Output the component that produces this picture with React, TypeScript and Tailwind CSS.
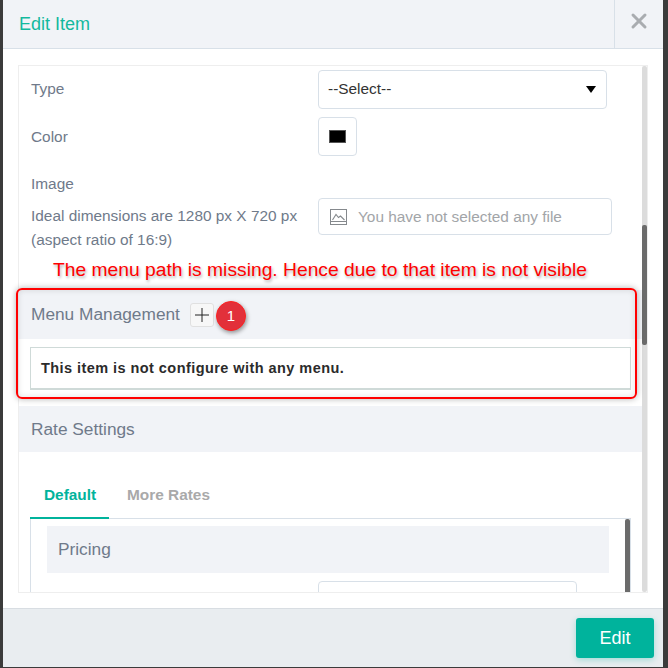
import { X } from "lucide-react"

const sans = "font-['Liberation_Sans',Arial,sans-serif]"

function ImageIcon() {
  return (
    <svg width="17" height="16" viewBox="0 0 17 16" fill="none" stroke="#85898d" strokeWidth="1">
      <rect x="0.5" y="0.5" width="16" height="15" />
      <path d="M0.5 12.5 H16.5" />
      <path d="M2.5 11 L6 5.5 L8.5 8.5 L10.5 7 L14.5 11" strokeWidth="1.1" />
    </svg>
  )
}

function PlusIcon() {
  return (
    <svg width="14" height="14" viewBox="0 0 14 14" stroke="#222" strokeWidth="1">
      <path d="M7 0 V14 M0 7 H14" />
    </svg>
  )
}

export default function App() {
  return (
    <div className={`w-[668px] h-[668px] bg-[#3b3b3b] pl-[3px] pr-[5px] pb-[1px] ${sans}`}>
      <div className="relative flex flex-col w-[660px] h-[667px] bg-white overflow-hidden">
        {/* Header */}
        <div className="flex h-[49px] shrink-0 items-stretch justify-between bg-[#f1f3f7] border-b border-[#d8e0e8]">
          <h4 className="pl-4 pt-[12px] text-[18px] leading-6 text-[#13b99e]">Edit Item</h4>
          <div className="flex w-[49px] justify-center pt-[9px] border-l border-[#d8e0e8]">
            <X size={24} strokeWidth={3} className="text-[#a9acb0]" />
          </div>
        </div>

        {/* Body */}
        <div className="flex-1 px-[15px] pt-[16px] pb-[15px] min-h-0">
          <div className="relative h-full w-[630px] border border-[#eeeeee] overflow-hidden">
            <div className="pr-[16px] text-[15.4px] text-[#6f7a8a]">
              <div className="flex items-center h-[38px] mt-[4px] pl-[12px]">
                <div className="w-[287px]">Type</div>
                <div className="flex items-center justify-between w-[289px] h-[39px] pl-[9px] pr-[10px] border border-[#d8e0e8] rounded-[4px] text-[#333]">
                  <span>--Select--</span>
                  <span className="w-0 h-0 border-x-[5px] border-x-transparent border-t-[7px] border-t-black" />
                </div>
              </div>
              <div className="flex items-center h-[39px] mt-[9px] pl-[12px]">
                <div className="w-[287px] pt-[1px]">Color</div>
                <div className="flex items-center justify-center w-[39px] h-[39px] border border-[#d8e0e8] rounded-[4px]">
                  <span className="w-[17px] h-[13px] bg-black border border-[#555]" />
                </div>
              </div>
              <div className="flex items-start mt-[16px] pl-[12px]">
                <div className="w-[287px] shrink-0">
                  <div className="leading-6">Image</div>
                  <div className="mt-[8px] leading-6 whitespace-nowrap">
                    Ideal dimensions are 1280 px X 720 px
                    <br />
                    (aspect ratio of 16:9)
                  </div>
                </div>
                <div className="flex items-center w-[294px] h-[37px] mt-[26px] pl-[11px] gap-[11px] border border-[#d8e0e8] rounded-[4px] text-[#a2a5a8] whitespace-nowrap">
                  <ImageIcon />
                  <span>You have not selected any file</span>
                </div>
              </div>

              {/* Menu Management */}
              <div className="flex items-center h-[49px] mt-[38px] pl-[12px] bg-[#f1f3f7] text-[17.3px] w-[623px]">
                Menu Management
                <span className="flex items-center justify-center w-[24px] h-[24px] ml-[10px] bg-[#f7f7f7] border border-[#e0e0e0] rounded-[3px]">
                  <PlusIcon />
                </span>
              </div>
              <div className="w-[601px] h-[43px] ml-[11px] mt-[8px] pl-[10px] pt-[1px] flex items-center border border-[#cfdad8] border-b-2 text-[14.5px] font-bold tracking-[0.44px] text-[#2b2b2b]">
                This item is not configure with any menu.
              </div>

              {/* Rate Settings */}
              <div className="flex items-center h-[46px] mt-[16px] pl-[12px] pt-[1px] bg-[#f1f3f7] text-[17.3px] w-[623px]">
                Rate Settings
              </div>
              <div className="flex h-[67px] ml-[11px] w-[601px] items-end border-b border-[#d8e0e8] font-bold">
                <div className="w-[79px] pl-[14px] pb-[11px] -mb-px border-b-2 border-[#00b39c] text-[#00b39c]">Default</div>
                <div className="pl-[18px] pb-[12px] text-[#a9a9a9]">More Rates</div>
              </div>
              <div className="relative ml-[11px] w-[601px] h-[80px] border-x border-[#d8e0e8] pl-[16px] pt-[7px]">
                <div className="flex items-center h-[47px] w-[562px] pl-[11px] bg-[#f1f3f7] text-[17.3px]">Pricing</div>
                <div className="ml-[271px] mt-[8px] w-[259px] h-[40px] border border-[#d8e0e8] rounded-[4px]" />
                {/* inner scrollbar */}
                <div className="absolute right-0 top-0 w-[5px] h-[80px] rounded-t-[2px] bg-[#6b6b6b]" />
              </div>
            </div>

            {/* outer scrollbar */}
            <div className="absolute right-0 top-0 bottom-0 w-[5px] rounded-[2px] bg-[#dcdcdc]">
              <div className="mt-[159px] h-[120px] rounded-[2px] bg-[#6b6b6b]" />
            </div>
          </div>
        </div>

        {/* Footer */}
        <div className="flex justify-end items-center h-[59px] shrink-0 pr-[9px] bg-[#e9edf0] border-t border-[#d8dde2]">
          <button className="w-[78px] h-[40px] rounded-[3px] bg-[#00b39c] text-[18px] text-white shadow-[0_2px_6px_rgba(0,179,156,0.3)]">
            Edit
          </button>
        </div>

        {/* Annotations drawn on the screenshot */}
        <div className="absolute left-[50px] top-[258px] text-[19.25px] leading-6 whitespace-nowrap text-[#ff0000] [text-shadow:1px_2px_3px_rgba(0,0,0,0.3)]">
          The menu path is missing. Hence due to that item is not visible
        </div>
        <div className="absolute left-[13px] top-[288px] w-[621px] h-[111px] rounded-[6px] border-2 border-[#ff0000] shadow-[0_0_6px_rgba(0,0,0,0.3),inset_0_0_6px_rgba(0,0,0,0.12)]" />
        <div className="absolute left-[213px] top-[301px] flex items-center justify-center w-[30px] h-[30px] rounded-full bg-[#e2303a] border border-[#ff2020] text-white text-[15px] shadow-[1px_2px_4px_rgba(0,0,0,0.4)]">
          1
        </div>
      </div>
    </div>
  )
}
